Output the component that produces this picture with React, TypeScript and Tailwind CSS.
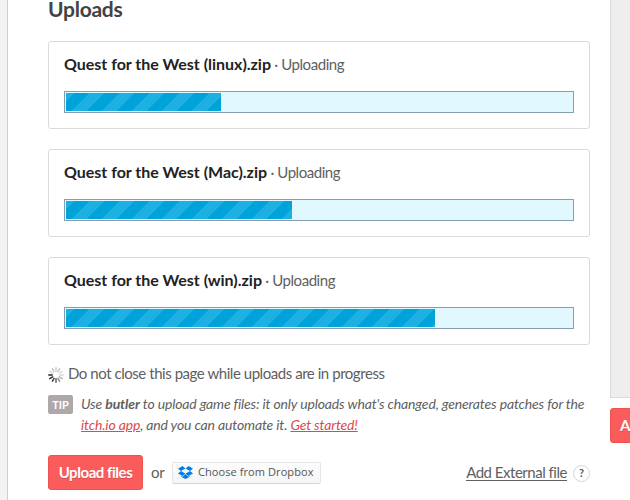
import React from "react";

const uploads = [
  { name: "Quest for the West (linux).zip", width: 155 },
  { name: "Quest for the West (Mac).zip", width: 226 },
  { name: "Quest for the West (win).zip", width: 369 },
];

// Spokes run clockwise from twelve o'clock.
const spokes = ["#d0ced0", "#c8c4c8", "#dddbdd", "#d6d2d6", "#b8b2b8", "#8e888e", "#625a62", "#453d45", "#352e35", "#2b252b", "#d8d8d8", "#c4c4c4"];

function Spinner() {
  return (
    <svg className="mt-px h-4 w-4 shrink-0" viewBox="0 0 16 16">
      {spokes.map((c, i) => (
        <line key={i} x1="8" y1="4.2" x2="8" y2="0.8" stroke={c} strokeWidth="1.5" strokeLinecap="round" transform={`rotate(${i * 30} 8 8)`} />
      ))}
    </svg>
  );
}

function Dropbox() {
  return (
    <svg className="h-[13px] w-[15px] shrink-0" viewBox="0 0 15 14" preserveAspectRatio="none" fill="#007ee5">
      <path d="M4.4 0 L7.5 2.7 L3 5.5 L0 3 Z M10.6 0 L15 3 L12 5.5 L7.5 2.7 Z M0 8 L3 5.5 L7.5 8.3 L4.4 10.9 Z M12 5.5 L15 8 L10.6 10.9 L7.5 8.3 Z M4.4 11.7 L7.5 9 L10.6 11.7 L12 10.8 V11.6 L7.5 14 L3 11.6 V10.8 Z" />
    </svg>
  );
}

export default function App() {
  return (
    <div className="flex h-[500px] w-[630px] overflow-hidden bg-[#f3f3f3] font-[Lato,sans-serif] text-[#606060]">
      <div className="w-[8px] shrink-0 border-r border-[#cfcfcf]" />
      <main className="w-[602px] shrink-0 bg-white pl-[40px] pr-[20px]">
        <h2 className="h-[41px] text-[21px] font-bold leading-[18px] tracking-[-0.25px] text-[#434343]">Uploads</h2>
        {uploads.map((u) => (
          <section key={u.name} className="mb-5 h-[88px] rounded-[3px] border border-[#dadada] px-[15px] pt-[10px]">
            <div className="flex h-6 items-baseline whitespace-pre text-[16px] leading-[23px]">
              <span className="font-bold tracking-[-0.02px] text-[#222]">{u.name}</span>
              <span className="text-[15px] tracking-[-0.45px]"> · Uploading</span>
            </div>
            <div className="mt-[15px] h-[22px] border border-[#849eb0] bg-[#e1f8ff] p-px">
              <div
                className="h-[18px] bg-[repeating-linear-gradient(135deg,#1db1e3_0px,#1db1e3_5.87px,#00a2da_5.87px,#00a2da_16.48px,#1db1e3_16.48px,#1db1e3_21.21px)]"
                style={{ width: u.width }}
              />
            </div>
          </section>
        ))}
        <div className="flex h-[18px] items-center gap-1 text-[15px] leading-[18px]">
          <Spinner />
          <span className="-mt-[2px] tracking-[-0.45px]">Do not close this page while uploads are in progress</span>
        </div>
        <div className="mt-[10px] flex text-[14px] italic leading-[21px]">
          <span className="mr-2 mt-[2px] flex h-[19px] w-[25px] shrink-0 items-center justify-center rounded-[2px] bg-[#aea8ab] text-[11px] font-bold not-italic text-white">TIP</span>
          <p className="whitespace-nowrap tracking-[-0.15px]">
            Use <b>butler</b> to upload game files: it only uploads what's changed, generates patches for the
            <br />
            <a className="text-[#da4b4b] underline">itch.io app</a>, and you can automate it. <a className="text-[#da4b4b] underline">Get started!</a>
          </p>
        </div>
        <div className="mt-[20px] flex h-[35px] items-center">
          <button className="h-[35px] w-[95px] whitespace-nowrap rounded-[3px] border border-[#ee5253] bg-[#fa5c5c] text-[15px] font-bold tracking-[-0.45px] text-white [text-shadow:0_1px_0_#d94d4d]">Upload files</button>
          <span className="ml-2 w-[13px] text-[15px] tracking-[-0.2px]">or</span>
          <button className="ml-2 flex h-[22px] w-[149px] items-center gap-[5px] whitespace-nowrap rounded-[2px] border border-[#e4e4e4] border-b-[#d4d4d4] bg-gradient-to-b from-[#fcfcfc] to-[#f5f5f5] pl-[5px] font-['Open_Sans',sans-serif] text-[11px] tracking-[0.08px] text-[#555]">
            <Dropbox />
            <span>Choose from Dropbox</span>
          </button>
          <a className="ml-auto border-b border-[#606060] text-[15px] leading-[16px] tracking-[-0.48px]">Add External file</a>
          <span className="ml-[6px] mt-[2px] flex h-[17px] w-[17px] items-center justify-center rounded-full border border-[#d5d5d5] text-[11px] font-bold">?</span>
        </div>
      </main>
      <aside className="w-[20px] shrink-0 bg-white">
        <div className="h-[398px] border-b border-l border-[#dadada] bg-[#eee]" />
        <button className="mt-[10px] h-[35px] w-[120px] rounded-[3px] border border-[#ee5253] bg-[#fa5c5c] pl-[9px] text-left text-[15px] font-bold text-white [text-shadow:0_1px_0_#d94d4d]">A</button>
      </aside>
    </div>
  );
}
